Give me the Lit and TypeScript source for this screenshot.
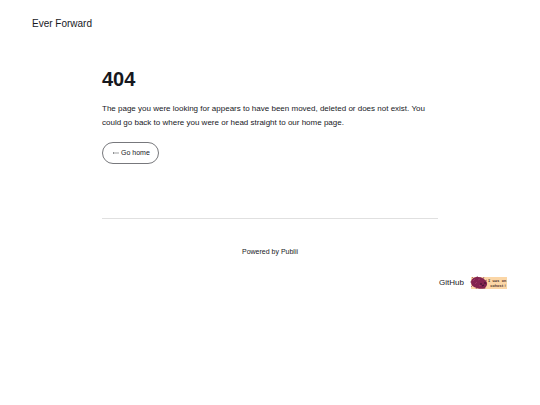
import { LitElement, html, css } from "lit";
import { customElement } from "lit/decorators.js";

@customElement("cohost-badge")
export class CohostBadge extends LitElement {
  static styles = css`
    :host { display: block; }
    svg { display: block; width: 37px; height: 14px; }
    .words {
      font: bold 38px "Liberation Mono", monospace;
      fill: #4a3028;
      text-rendering: geometricPrecision;
    }
  `;
  render() {
    return html`<svg viewBox="0 0 370 140" role="img" aria-label="I was on cohost!">
      <rect x="10" y="10" width="360" height="120" fill="#fbd6a6" />
      <path d="M20 10 L40 30 M70 0 L80 20 M140 10 L130 30 M10 110 L30 90 M60 130 L70 110 M150 130 L140 110 M0 60 H20 M170 40 L150 50" stroke="#8a4560" stroke-width="7" />
      <path d="M10 60 C10 30 40 10 80 10 C120 10 140 30 160 50 C180 70 170 100 150 120 C120 140 60 120 40 110 C20 100 10 80 10 60 Z" fill="#832350" />
      <path d="M30 50 L50 30 M50 80 L70 60 M80 40 L100 30 M90 100 L110 90" stroke="#a13a68" stroke-width="8" />
      <path d="M110 70 V90 M150 60 V80 M120 100 L140 90" stroke="#35102d" stroke-width="10" fill="none" />
      <text class="words" x="180" y="62">I was on</text>
      <text class="words" x="202" y="106">cohost!</text>
    </svg>`;
  }
}

@customElement("app-root")
export class AppRoot extends LitElement {
  static styles = css`
    :host {
      display: block;
      font: 8px/14px "Liberation Sans", Arial, sans-serif;
      color: #17181e;
      background: #fff;
    }
    a { color: inherit; text-decoration: none; }
    .top { padding: 16px 32px; font-size: 10px; line-height: 16px; }
    .top a { display: block; }
    .column { max-width: 336px; margin: 0 auto; }
    main { padding: 19px 0 54px; border-bottom: 1px solid #e0e0e0; }
    h1 { margin: 0 0 11px; font-size: 20px; line-height: 24px; }
    p { margin: 0 0 12px; }
    .home {
      display: inline-flex;
      align-items: center;
      gap: 1px;
      box-sizing: border-box;
      height: 22px;
      padding: 0 8px 0 9px;
      border: 1px solid #77787c;
      border-radius: 11px;
      font-size: 7px;
    }
    .home svg { width: 8px; height: 6px; }
    .powered { padding: 26px 0 17px; text-align: center; font-size: 7px; }
    .links {
      display: flex;
      justify-content: flex-end;
      align-items: center;
      gap: 6px;
      padding: 0 33px 16px;
    }
  `;
  render() {
    return html`
      <header class="top"><a href="/">Ever Forward</a></header>
      <main class="column">
        <h1>404</h1>
        <p>The page you were looking for appears to have been moved, deleted or does not exist. You could go back to where you were or head straight to our home page.</p>
        <a class="home" href="/"><svg viewBox="0 0 8 6" aria-hidden="true"><path d="M2 2 L1 3 L2 4 M1 3 H7" fill="none" stroke="#77787c" stroke-width="0.7" /></svg>Go home</a>
      </main>
      <footer>
        <div class="powered">Powered by Publii</div>
        <nav class="links">
          <a href="https://github.com">GitHub</a>
          <a href="https://cohost.org"><cohost-badge></cohost-badge></a>
        </nav>
      </footer>
    `;
  }
}
